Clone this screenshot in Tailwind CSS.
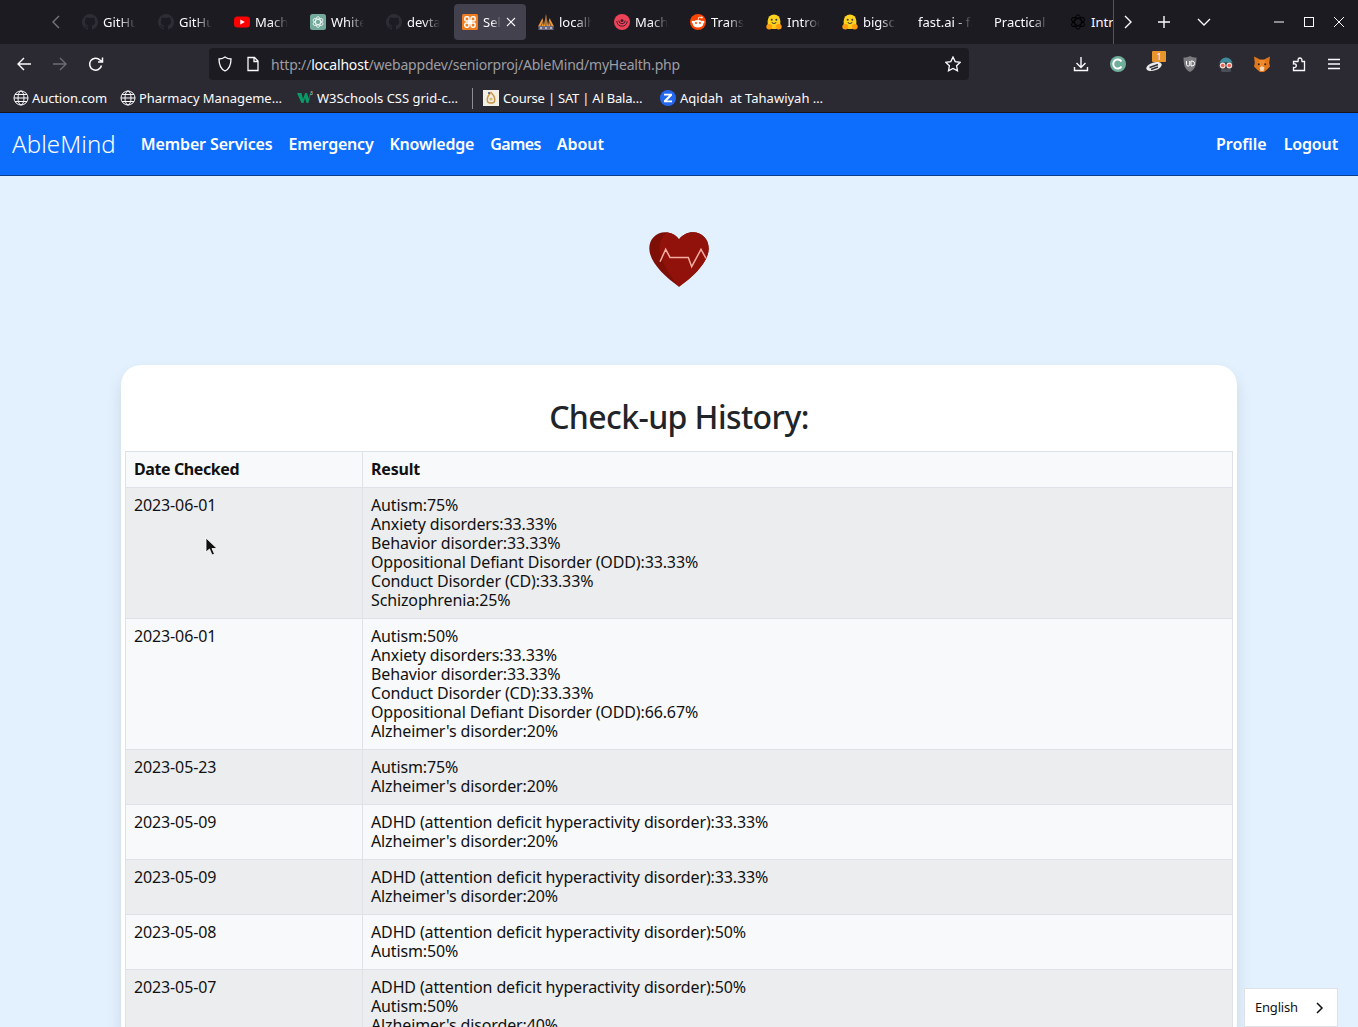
<!DOCTYPE html>
<html lang="en">
<head>
    <meta charset="UTF-8">
    <meta name="viewport" content="width=device-width, initial-scale=1.0">
    <title>AbleMind - myHealth</title>
    <script src="https://cdn.jsdelivr.net/npm/@tailwindcss/browser@4"></script>
</head>
<body class="relative h-[1027px] overflow-hidden bg-[#e2f1fd] font-['Noto_Sans',sans-serif] text-[16px] leading-[19px] tracking-[-0.13px] text-[#111]">

<!-- shared icons -->
<svg class="hidden">
    <symbol id="github" viewBox="0 0 16 16"><path fill="#2e2d35" d="M8 0a8 8 0 0 0-2.500 15.600c.4.1.5-.2.5-.4v-1.400c-2.200.5-2.700-1-2.700-1-.4-.9-.9-1.200-.9-1.200-.7-.5.1-.5.1-.5.8.1 1.200.8 1.200.8.7 1.200 1.900.9 2.300.7.1-.5.3-.9.5-1.100-1.800-.2-3.600-.9-3.600-4 0-.9.3-1.600.8-2.100-.1-.2-.4-1 .1-2.100 0 0 .7-.2 2.200.8a7.600 7.600 0 0 1 4 0c1.500-1 2.200-.8 2.200-.8.500 1.100.2 1.900.1 2.100.5.5.8 1.200.8 2.100 0 3.100-1.900 3.800-3.700 4 .3.3.6.8.6 1.500v2.200c0 .2.1.5.5.4A8 8 0 0 0 8 0z"/></symbol>
    <symbol id="hug" viewBox="0 0 16 16">
        <circle cx="8" cy="6.800" r="6.300" fill="#ffd21e"/>
        <rect x="1.700" y="7" width="12.600" height="6.500" fill="#ffd21e"/>
        <ellipse cx="3.300" cy="12.800" rx="3" ry="2.700" fill="#ff9d0b"/>
        <ellipse cx="12.700" cy="12.800" rx="3" ry="2.700" fill="#ff9d0b"/>
        <rect x="5.500" y="12.500" width="5" height="2.500" fill="#ffc21e"/>
        <circle cx="5.700" cy="5.800" r="1" fill="#3a3b45"/>
        <circle cx="10.300" cy="5.800" r="1" fill="#3a3b45"/>
        <path d="M5.800 8.300c1 1.500 3.400 1.500 4.400 0" fill="none" stroke="#3a3b45" stroke-width="1.100"/>
    </symbol>
    <symbol id="knot" viewBox="0 0 16 16">
        <g fill="none" stroke="currentColor" stroke-width="1">
            <ellipse cx="8" cy="8" rx="3.300" ry="7.200"/>
            <ellipse cx="8" cy="8" rx="3.300" ry="7.200" transform="rotate(60 8 8)"/>
            <ellipse cx="8" cy="8" rx="3.300" ry="7.200" transform="rotate(120 8 8)"/>
        </g>
    </symbol>
    <symbol id="globe" viewBox="0 0 16 16">
        <g fill="none" stroke="#fbfbfe">
            <circle cx="8" cy="8" r="7"/>
            <ellipse cx="8" cy="8" rx="3" ry="7"/>
            <path d="M1 8h14M2 4.500h12M2 11.500h12"/>
        </g>
    </symbol>
</svg>

<!-- tab strip -->
<div class="flex h-[44px] bg-[#1c1b22] text-[13px] tracking-normal text-[#fbfbfe]">
    <div class="flex w-[74px] items-center justify-end pr-[13px]">
        <svg class="h-[16px] w-[10px]" viewBox="0 0 10 16" fill="none" stroke="#77767c" stroke-width="1.400"><path d="M8 2 2 8l6 6"/></svg>
    </div>
    <div class="flex w-[1039px] gap-[4px] overflow-hidden pt-[4px]">
        <div class="flex h-[36px] w-[72px] shrink-0 items-center gap-[5px] pl-[8px]">
            <svg class="h-[16px] w-[16px] shrink-0"><use href="#github"/></svg>
            <span class="w-[33px] overflow-hidden whitespace-nowrap [mask-image:linear-gradient(to_right,#000_50%,transparent)]">GitHub</span>
        </div>
        <div class="flex h-[36px] w-[72px] shrink-0 items-center gap-[5px] pl-[8px]">
            <svg class="h-[16px] w-[16px] shrink-0"><use href="#github"/></svg>
            <span class="w-[33px] overflow-hidden whitespace-nowrap [mask-image:linear-gradient(to_right,#000_50%,transparent)]">GitHub</span>
        </div>
        <div class="flex h-[36px] w-[72px] shrink-0 items-center gap-[5px] pl-[8px]">
            <svg class="h-[16px] w-[16px] shrink-0" viewBox="0 0 16 16"><rect y="2.500" width="16" height="11" rx="3.500" fill="#f00"/><path d="M6.300 5.400 10.800 8l-4.500 2.600z" fill="#fff"/></svg>
            <span class="w-[33px] overflow-hidden whitespace-nowrap [mask-image:linear-gradient(to_right,#000_50%,transparent)]">Machine</span>
        </div>
        <div class="flex h-[36px] w-[72px] shrink-0 items-center gap-[5px] pl-[8px]">
            <svg class="h-[16px] w-[16px] shrink-0 text-white" viewBox="0 0 16 16"><rect width="16" height="16" rx="2.500" fill="#74aa9c"/><use href="#knot" x="2" y="2" width="12" height="12"/></svg>
            <span class="w-[33px] overflow-hidden whitespace-nowrap [mask-image:linear-gradient(to_right,#000_50%,transparent)]">Whitepaper</span>
        </div>
        <div class="flex h-[36px] w-[72px] shrink-0 items-center gap-[5px] pl-[8px]">
            <svg class="h-[16px] w-[16px] shrink-0"><use href="#github"/></svg>
            <span class="w-[33px] overflow-hidden whitespace-nowrap [mask-image:linear-gradient(to_right,#000_50%,transparent)]">devtalk</span>
        </div>
        <div class="flex h-[36px] w-[72px] shrink-0 items-center gap-[5px] rounded-[4px] bg-[#42414d] pl-[8px]">
            <svg class="h-[16px] w-[16px] shrink-0" viewBox="0 0 16 16" fill="none"><rect width="16" height="16" rx="1.500" fill="#ee7d22"/><rect x="2.800" y="2.800" width="4.200" height="4.200" rx="1.600" stroke="#fff" stroke-width="1.500"/><rect x="9" y="2.800" width="4.200" height="4.200" rx="1.600" stroke="#fff" stroke-width="1.500"/><rect x="2.800" y="9" width="4.200" height="4.200" rx="1.600" stroke="#fff" stroke-width="1.500"/><rect x="9" y="9" width="4.200" height="4.200" rx="1.600" stroke="#fff" stroke-width="1.500"/><rect x="6" y="6" width="4" height="4" fill="#fff"/></svg>
            <span class="w-[18px] overflow-hidden whitespace-nowrap [mask-image:linear-gradient(to_right,#000_50%,transparent)]">Select</span>
            <svg class="h-[10px] w-[10px] shrink-0" viewBox="0 0 10 10" stroke="#fbfbfe" stroke-width="1.100"><path d="M1 1l8 8M9 1 1 9"/></svg>
        </div>
        <div class="flex h-[36px] w-[72px] shrink-0 items-center gap-[5px] pl-[8px]">
            <svg class="h-[16px] w-[16px] shrink-0" viewBox="0 0 16 16"><path d="M0 12.500 4.500 4l1.500 8.500zM5.800 12.500 8 0l2.200 12.500zM10 12.500 11.500 4l4.500 8.500z" fill="#f0982f"/><path d="M3 12l2.300-5M13 12l-2.300-5M8 12V3" stroke="#3b3a52" stroke-width=".7"/><rect x=".5" y="12" width="15" height="4" fill="#6a6980"/><path d="M2 14h2M7 14h2M12 14h2" stroke="#fff"/></svg>
            <span class="w-[33px] overflow-hidden whitespace-nowrap [mask-image:linear-gradient(to_right,#000_50%,transparent)]">localhost</span>
        </div>
        <div class="flex h-[36px] w-[72px] shrink-0 items-center gap-[5px] pl-[8px]">
            <svg class="h-[16px] w-[16px] shrink-0" viewBox="0 0 16 16" fill="none"><circle cx="8" cy="8" r="8" fill="#ee4258"/><path d="M2.800 7a5.200 5.200 0 0 0 10.400 0" stroke="#4a1f2c" stroke-width="1"/><path d="M4.800 6.500a3.200 3.200 0 0 0 6.400 0" stroke="#4a1f2c" stroke-width="1"/><circle cx="8" cy="6.500" r="1.500" fill="#4a1f2c"/></svg>
            <span class="w-[33px] overflow-hidden whitespace-nowrap [mask-image:linear-gradient(to_right,#000_50%,transparent)]">Machine</span>
        </div>
        <div class="flex h-[36px] w-[72px] shrink-0 items-center gap-[5px] pl-[8px]">
            <svg class="h-[16px] w-[16px] shrink-0" viewBox="0 0 16 16"><circle cx="8" cy="8" r="8" fill="#ff4500"/><circle cx="2.900" cy="8" r="1.300" fill="#fff"/><circle cx="13.100" cy="8" r="1.300" fill="#fff"/><ellipse cx="8" cy="9.700" rx="5.300" ry="3.800" fill="#fff"/><circle cx="6" cy="9" r="1" fill="#ff4500"/><circle cx="10" cy="9" r="1" fill="#ff4500"/><path d="M8 6 9 3l2.500.6" fill="none" stroke="#fff" stroke-width=".8"/><circle cx="11.700" cy="3.500" r="1" fill="#fff"/></svg>
            <span class="w-[33px] overflow-hidden whitespace-nowrap [mask-image:linear-gradient(to_right,#000_50%,transparent)]">Transformers</span>
        </div>
        <div class="flex h-[36px] w-[72px] shrink-0 items-center gap-[5px] pl-[8px]">
            <svg class="h-[16px] w-[16px] shrink-0"><use href="#hug"/></svg>
            <span class="w-[33px] overflow-hidden whitespace-nowrap [mask-image:linear-gradient(to_right,#000_50%,transparent)]">Introduction</span>
        </div>
        <div class="flex h-[36px] w-[72px] shrink-0 items-center gap-[5px] pl-[8px]">
            <svg class="h-[16px] w-[16px] shrink-0"><use href="#hug"/></svg>
            <span class="w-[33px] overflow-hidden whitespace-nowrap [mask-image:linear-gradient(to_right,#000_50%,transparent)]">bigscience</span>
        </div>
        <div class="flex h-[36px] w-[72px] shrink-0 items-center pl-[8px]">
            <span class="w-[54px] overflow-hidden whitespace-nowrap [mask-image:linear-gradient(to_right,#000_70%,transparent)]">fast.ai - fast</span>
        </div>
        <div class="flex h-[36px] w-[72px] shrink-0 items-center pl-[8px]">
            <span class="w-[54px] overflow-hidden whitespace-nowrap [mask-image:linear-gradient(to_right,#000_70%,transparent)]">Practical Deep</span>
        </div>
        <div class="flex h-[36px] w-[72px] shrink-0 items-center gap-[5px] pl-[8px]">
            <svg class="h-[16px] w-[16px] shrink-0 text-black"><use href="#knot"/></svg>
            <span class="overflow-hidden whitespace-nowrap">Introduction</span>
        </div>
    </div>
    <div class="flex flex-1 items-center border-l border-[#55545c]">
        <div class="flex w-[28px] justify-center">
            <svg class="h-[16px] w-[10px]" viewBox="0 0 10 16" fill="none" stroke="#fbfbfe" stroke-width="1.400"><path d="m2 2 6 6-6 6"/></svg>
        </div>
        <div class="ml-[4px] flex w-[36px] justify-center">
            <svg class="h-[14px] w-[14px]" viewBox="0 0 14 14" stroke="#fbfbfe" stroke-width="1.400"><path d="M7 1v12M1 7h12"/></svg>
        </div>
        <div class="ml-[4px] flex w-[36px] justify-center">
            <svg class="h-[10px] w-[14px]" viewBox="0 0 14 10" fill="none" stroke="#fbfbfe" stroke-width="1.300"><path d="m1 2 6 6 6-6"/></svg>
        </div>
        <div class="ml-[42px] flex w-[30px] justify-center">
            <svg class="h-[10px] w-[10px]" viewBox="0 0 10 10" stroke="#fbfbfe"><path d="M0 5h10"/></svg>
        </div>
        <div class="flex w-[30px] justify-center">
            <svg class="h-[10px] w-[10px]" viewBox="0 0 10 10" fill="none" stroke="#fbfbfe"><rect x=".5" y=".5" width="9" height="9"/></svg>
        </div>
        <div class="flex w-[30px] justify-center">
            <svg class="h-[10px] w-[10px]" viewBox="0 0 10 10" stroke="#fbfbfe"><path d="m0 0 10 10M10 0 0 10"/></svg>
        </div>
    </div>
</div>

<!-- toolbar -->
<div class="flex h-[40px] items-center bg-[#2b2a33]">
    <div class="ml-[6px] flex w-[36px] justify-center">
        <svg class="h-[16px] w-[16px]" viewBox="0 0 16 16" fill="none" stroke="#fbfbfe" stroke-width="1.400"><path d="M15 8H2M8 2 2 8l6 6"/></svg>
    </div>
    <div class="flex w-[36px] justify-center">
        <svg class="h-[16px] w-[16px]" viewBox="0 0 16 16" fill="none" stroke="#6e6d74" stroke-width="1.400"><path d="M1 8h13M8 2l6 6-6 6"/></svg>
    </div>
    <div class="flex w-[36px] justify-center">
        <svg class="h-[16px] w-[16px]" viewBox="0 0 16 16" fill="none" stroke="#fbfbfe" stroke-width="1.500"><path d="M13.500 9.500A6 6 0 1 1 12 4L14.500 6M14.500 1.500V6H10"/></svg>
    </div>
    <div class="ml-[95px] flex h-[32px] w-[760px] items-center rounded-[4px] bg-[#1c1b22] text-[14px]">
        <svg class="ml-[8px] h-[16px] w-[16px]" viewBox="0 0 16 16" fill="none" stroke="#fbfbfe" stroke-width="1.300"><path d="M8 1c2 1.500 4 2 6 2 0 6-1.500 10-6 12C3.500 13 2 9 2 3c2 0 4-.5 6-2z"/></svg>
        <svg class="ml-[12px] h-[16px] w-[16px]" viewBox="0 0 16 16" fill="none" stroke="#fbfbfe" stroke-width="1.300"><path d="M3 1.500h6.500L13 5v9.500H3zM9 1.500V5.500h4"/></svg>
        <span class="ml-[10px] whitespace-nowrap tracking-[-0.2px] text-[#9d9da3]">http://<span class="text-[#fbfbfe]">localhost</span>/webappdev/seniorproj/AbleMind/myHealth.php</span>
        <svg class="ml-auto mr-[8px] h-[16px] w-[16px]" viewBox="0 0 16 16" fill="none" stroke="#fbfbfe" stroke-width="1.300"><path d="m8 1 2.200 4.600 5 .7-3.600 3.500.9 5L8 12.400 3.500 14.800l.9-5L.8 6.300l5-.7z"/></svg>
    </div>
    <div class="ml-[94px] flex">
        <div class="flex w-[36px] justify-center">
            <svg class="h-[16px] w-[16px]" viewBox="0 0 16 16" fill="none" stroke="#fbfbfe" stroke-width="1.400"><path d="M8 1v10M3.500 7 8 11.500 12.500 7M1.500 11v3.500h13V11"/></svg>
        </div>
        <div class="ml-[1px] flex w-[36px] justify-center">
            <svg class="h-[16px] w-[16px]" viewBox="0 0 16 16" fill="none"><circle cx="8" cy="8" r="8" fill="#6fae9a"/><path d="M11.500 5.500A4.500 4.500 0 1 0 11.500 10.500" stroke="#fff" stroke-width="2"/></svg>
        </div>
        <div class="relative flex w-[36px] justify-center">
            <svg class="h-[16px] w-[16px]" viewBox="0 0 16 16" fill="none"><ellipse cx="8" cy="10.500" rx="8" ry="4" transform="rotate(-18 8 10.500)" fill="#ececec"/><path d="M3.500 11.500 12 8.500M5 13.500l7-2.500" stroke="#2f2e36" stroke-width="1.400"/><path d="m9 6 3-4" stroke="#ececec" stroke-width="1.500"/></svg>
            <span class="absolute left-[16px] top-[-5px] flex h-[11px] w-[14px] items-center justify-center rounded-[1px] bg-[#e8952c] text-[9px] leading-[11px] text-white">1</span>
        </div>
        <div class="flex w-[36px] justify-center">
            <svg class="h-[16px] w-[16px]" viewBox="0 0 16 16"><path d="M8 0c2 1 4 1.500 6.500 1.500C14.500 9 13 13.500 8 16 3 13.500 1.500 9 1.500 1.500 4 1.500 6 1 8 0z" fill="#7b7b80"/><path d="M4.500 5v3.500a1.600 1.600 0 0 0 3.200 0V5M9 5v5h1a2.500 2.500 0 0 0 0-5z" fill="none" stroke="#fff"/></svg>
        </div>
        <div class="flex w-[36px] justify-center">
            <svg class="h-[16px] w-[16px]" viewBox="0 0 16 16"><path d="M1.500 8a6.500 6.500 0 0 1 13 0z" fill="#3f8a9b"/><rect x="3" y="12" width="10" height="4" rx="1.500" fill="#4a4e56"/><rect y="6.500" width="16" height="6" rx="3" fill="#30333a"/><circle cx="4.700" cy="9.500" r="2.900" fill="#f3e2dc"/><circle cx="11.300" cy="9.500" r="2.900" fill="#f3e2dc"/><circle cx="4.700" cy="9.500" r="1.800" fill="#e8604f"/><circle cx="11.300" cy="9.500" r="1.800" fill="#e8604f"/></svg>
        </div>
        <div class="flex w-[36px] justify-center">
            <svg class="h-[16px] w-[16px]" viewBox="0 0 16 16"><path d="M0 .5 6 3.500h4L16 .5 15.200 7l.8 3.500-3 3-3 2.500H6l-3-2.500-3-3L.8 7z" fill="#e2761b"/><path d="M5.500 4h5L12 8l-2 2H6L4 8z" fill="#f08a2c"/><path d="m5.500 11.500 2.500-1.500 2.500 1.500L9.500 15h-3z" fill="#f6d3b0"/><circle cx="4.800" cy="8.300" r="1" fill="#30261c"/><circle cx="11.200" cy="8.300" r="1" fill="#30261c"/></svg>
        </div>
        <div class="flex w-[36px] justify-center">
            <svg class="h-[16px] w-[16px]" viewBox="0 0 16 16" fill="none" stroke="#fbfbfe" stroke-width="1.300"><path d="M6 5.500h2c.5-.8 0-1.500.2-2.500a2 2 0 0 1 3.600.3c.2.9-.2 1.400.2 2.200h2.500v9H3.500v-3c1.700.4 2.800-.4 2.800-1.800S5.200 7.500 3.500 8V5.500z"/></svg>
        </div>
        <div class="flex w-[36px] justify-center">
            <svg class="h-[16px] w-[16px]" viewBox="0 0 16 16" stroke="#fbfbfe" stroke-width="1.300"><path d="M2 3.500h12M2 8h12M2 12.500h12"/></svg>
        </div>
    </div>
</div>

<!-- bookmarks -->
<div class="flex h-[29px] items-center border-b border-[#16151b] bg-[#2b2a33] text-[13px] tracking-normal text-[#fbfbfe]">
    <svg class="ml-[13px] h-[16px] w-[16px] shrink-0"><use href="#globe"/></svg>
    <span class="ml-[3px] w-[88px] whitespace-nowrap tracking-[-0.1px]">Auction.com</span>
    <svg class="h-[16px] w-[16px] shrink-0"><use href="#globe"/></svg>
    <span class="ml-[3px] w-[158px] whitespace-nowrap tracking-[-0.05px]">Pharmacy Manageme…</span>
    <svg class="h-[16px] w-[16px] shrink-0" viewBox="0 0 16 16"><path d="M0 3h4.500L6 9l2.200-6h1.600L12 9l1-6h1l-2.600 10H9.500L8 8l-1.500 5H4.500z" fill="#0a9a68"/><text x="13" y="5" font-size="5" fill="#d8d8d8">3</text></svg>
    <span class="ml-[4px] w-[155px] whitespace-nowrap">W3Schools CSS grid-c…</span>
    <span class="h-[21px] w-px shrink-0 bg-[#8f8e94]"></span>
    <svg class="ml-[10px] h-[16px] w-[16px] shrink-0" viewBox="0 0 16 16"><rect width="16" height="16" fill="#f4efe4"/><path d="M8 2.500c-3 3-4.500 6-3.500 9 .7 2 6.300 2 7 0 1-3-.5-6-3.500-9z" fill="none" stroke="#c79a4b" stroke-width="1.500"/><circle cx="8" cy="9" r="1.600" fill="#d9b878"/><circle cx="6" cy="3" r="1" fill="#3b4a86"/></svg>
    <span class="ml-[4px] w-[157px] whitespace-nowrap tracking-[-0.22px]">Course | SAT | Al Bala…</span>
    <svg class="h-[16px] w-[16px] shrink-0" viewBox="0 0 16 16"><circle cx="8" cy="8" r="8" fill="#2568ef"/><path d="M4 3.800h8v1.800L7 10.400h5v1.800H4v-1.800l5-4.800H4z" fill="#fff"/></svg>
    <span class="ml-[4px] whitespace-pre">Aqidah  at Tahawiyah …</span>
</div>

<!-- navbar -->
<nav class="flex h-[63px] items-center border-b border-[#0a3d8a] bg-[#0d6efd] pl-[12px] pr-[20px] tracking-normal text-white">
    <a class="pb-[2px] text-[24px] font-light leading-[29px] tracking-[0.1px]">AbleMind</a>
    <div class="ml-[25px] flex gap-[16px] font-semibold">
        <a class="tracking-[-0.13px]">Member Services</a>
        <a class="tracking-[-0.22px]">Emergency</a>
        <a class="tracking-[-0.22px]">Knowledge</a>
        <a class="tracking-[-0.6px]">Games</a>
        <a>About</a>
    </div>
    <div class="ml-auto flex gap-[17px] font-semibold">
        <a>Profile</a>
        <a class="tracking-[-0.15px]">Logout</a>
    </div>
</nav>

<!-- heart -->
<div class="flex justify-center pt-[56px]">
    <svg class="h-[55px] w-[60px]" viewBox="0 0 60 55">
        <path d="M30 7.500C27 3 21.500.3 16 .3 7 .3.3 7.500.3 16.500.3 30 16 45 30 54.700 44 45 59.700 30 59.700 16.500 59.700 7.500 53 .3 44 .3 38.500.3 33 3 30 7.500z" fill="#7d0f07"/>
        <path d="M30 7.500C27.500 3.500 23 .8 17.500.8 12 6 9.500 12 11 20 14 35 24 47 30 54.700 44 45 59.700 30 59.700 16.500 59.700 7.500 53 .3 44 .3 38.500.3 33 3 30 7.500z" fill="#91120a"/>
        <path d="M11 29.700 16.700 17.300 21 25.500H39.300L42.700 34.700 52 17.300 57 26.300" fill="none" stroke="#f3aca2" stroke-width="1.500"/>
    </svg>
</div>

<!-- history card -->
<div class="ml-[121px] mt-[78px] w-[1116px] rounded-[20px] bg-white px-[4px] shadow-[0_8px_16px_rgba(0,0,0,0.1)]">
    <h2 class="flex h-[86px] items-center justify-center pt-[16px] text-[32px] font-medium tracking-[-0.6px] text-[#212529]">Check-up History:</h2>
    <table class="w-full table-fixed border border-[#dee2e6]">
        <colgroup>
            <col class="w-[237px]">
            <col>
        </colgroup>
        <thead class="bg-[#f8f9fa]">
            <tr>
                <th class="border border-[#dee2e6] p-[8px] text-left font-bold tracking-[-0.4px]">Date Checked</th>
                <th class="border border-[#dee2e6] p-[8px] text-left font-bold tracking-[-0.2px]">Result</th>
            </tr>
        </thead>
        <tbody>
            <tr class="bg-[#ecedef]">
                <td class="border border-[#dee2e6] p-[8px] align-top">2023-06-01</td>
                <td class="border border-[#dee2e6] p-[8px] align-top">Autism:75%<br>Anxiety disorders:33.33%<br>Behavior disorder:33.33%<br>Oppositional Defiant Disorder (ODD):33.33%<br>Conduct Disorder (CD):33.33%<br>Schizophrenia:25%</td>
            </tr>
            <tr class="bg-[#f8f9fa]">
                <td class="border border-[#dee2e6] p-[8px] align-top">2023-06-01</td>
                <td class="border border-[#dee2e6] p-[8px] align-top">Autism:50%<br>Anxiety disorders:33.33%<br>Behavior disorder:33.33%<br>Conduct Disorder (CD):33.33%<br>Oppositional Defiant Disorder (ODD):66.67%<br>Alzheimer's disorder:20%</td>
            </tr>
            <tr class="bg-[#ecedef]">
                <td class="border border-[#dee2e6] p-[8px] align-top">2023-05-23</td>
                <td class="border border-[#dee2e6] p-[8px] align-top">Autism:75%<br>Alzheimer's disorder:20%</td>
            </tr>
            <tr class="bg-[#f8f9fa]">
                <td class="border border-[#dee2e6] p-[8px] align-top">2023-05-09</td>
                <td class="border border-[#dee2e6] p-[8px] align-top">ADHD (attention deficit hyperactivity disorder):33.33%<br>Alzheimer's disorder:20%</td>
            </tr>
            <tr class="bg-[#ecedef]">
                <td class="border border-[#dee2e6] p-[8px] align-top">2023-05-09</td>
                <td class="border border-[#dee2e6] p-[8px] align-top">ADHD (attention deficit hyperactivity disorder):33.33%<br>Alzheimer's disorder:20%</td>
            </tr>
            <tr class="bg-[#f8f9fa]">
                <td class="border border-[#dee2e6] p-[8px] align-top">2023-05-08</td>
                <td class="border border-[#dee2e6] p-[8px] align-top">ADHD (attention deficit hyperactivity disorder):50%<br>Autism:50%</td>
            </tr>
            <tr class="bg-[#ecedef]">
                <td class="border border-[#dee2e6] p-[8px] align-top">2023-05-07</td>
                <td class="border border-[#dee2e6] p-[8px] align-top">ADHD (attention deficit hyperactivity disorder):50%<br>Autism:50%<br>Alzheimer's disorder:40%</td>
            </tr>
        </tbody>
    </table>
</div>

<!-- mouse pointer -->
<svg class="absolute left-[205px] top-[537px] h-[20px] w-[13px]" viewBox="0 0 13 20"><path d="M1 1v14l3.500-3 2.500 6 2.500-1-2.500-5.500H12z" fill="#111" stroke="#fff" stroke-width=".8"/></svg>

<!-- language switcher -->
<div class="absolute left-[1244px] top-[988px] flex h-[39px] w-[94px] items-center border border-[#dee2e6] bg-white pl-[10px] text-[13px] tracking-[-0.2px]">
    English
    <svg class="absolute left-[71px] top-[13px] h-[12px] w-[8px]" viewBox="0 0 8 12" fill="none" stroke="#111" stroke-width="1.500"><path d="m1 1 5 5-5 5"/></svg>
</div>

</body>
</html>
